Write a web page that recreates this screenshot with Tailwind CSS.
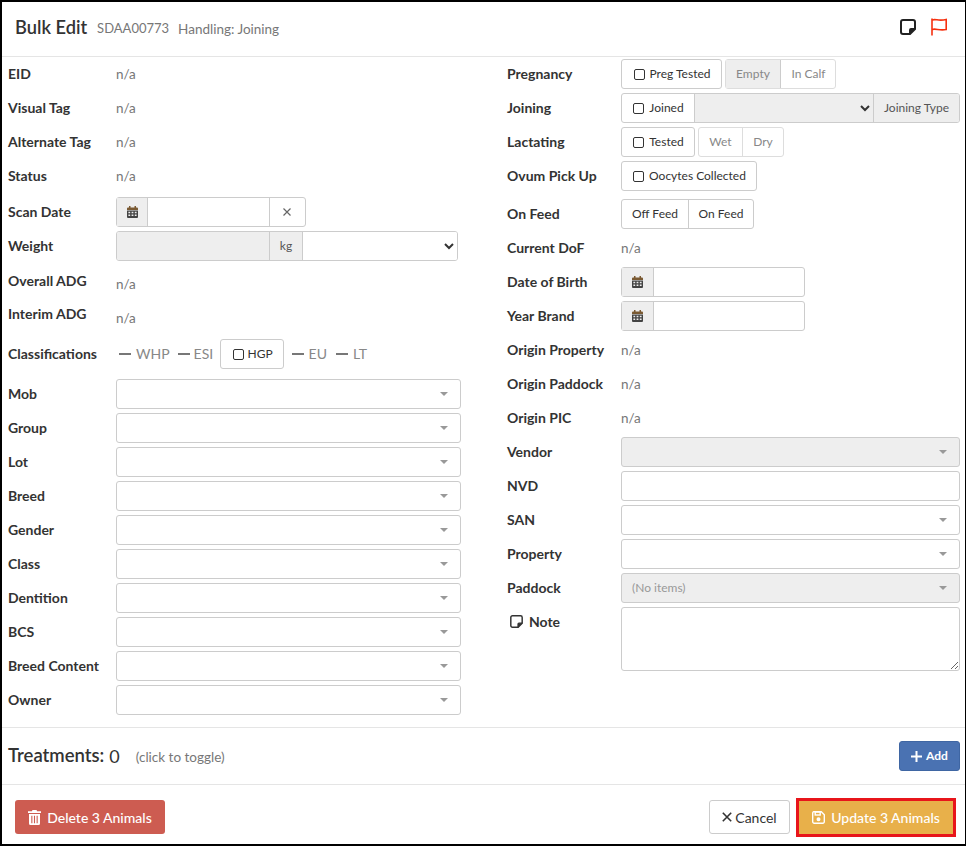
<!DOCTYPE html>
<html lang="en">
<head>
<meta charset="UTF-8">
<title>Bulk Edit</title>
<script src="https://cdn.jsdelivr.net/npm/@tailwindcss/browser@4"></script>
</head>
<body class="bg-white">
<div class="w-[966px] h-[846px] flex flex-col border-t-2 border-l-2 border-r border-b-2 border-black bg-white font-['Lato',sans-serif] text-[14px] text-[#333]">

  <!-- header -->
  <div class="h-[55px] shrink-0 flex items-center pl-[13px] pr-[18px] border-b border-[#e5e5e5]">
    <span class="text-[18.250px] font-semibold text-[#333] pb-[2px]">Bulk Edit</span>
    <span class="ml-[10px] text-[13px] text-[#777]">SDAA00773</span>
    <span class="ml-[9px] text-[13.500px] text-[#777]">Handling: Joining</span>
    <div class="ml-auto flex items-center gap-[15px] pb-[4px]">
      <svg width="16" height="16" viewBox="0 0 16 16" fill="none" stroke="#222" stroke-width="2"><path d="M10 15H3a2 2 0 0 1-2-2V3a2 2 0 0 1 2-2h10a2 2 0 0 1 2 2v7z"/><path d="M15 10h-4a1 1 0 0 0-1 1v4" fill="#222"/></svg>
      <svg width="16" height="18" viewBox="0 0 16 18" fill="none" stroke="#f5300f" stroke-width="1.600"><path d="M1 0.500V17.500"/><path d="M1 2C5 0.500 7 3.500 15.200 1.500V11.500C8 13 5 10 1 11.500"/></svg>
    </div>
  </div>

  <!-- form -->
  <div class="h-[671px] shrink-0 flex border-b border-[#e5e5e5]">
    <div class="w-[459px] shrink-0 pl-[6px]">
      <div class="h-[34px] flex items-center"><span class="w-[108px] pb-[2px] font-bold">EID</span><span class="text-[13.500px] text-[#777]">n/a</span></div>
      <div class="h-[34px] flex items-center"><span class="w-[108px] pb-[2px] font-bold">Visual Tag</span><span class="text-[13.500px] text-[#777]">n/a</span></div>
      <div class="h-[34px] flex items-center"><span class="w-[108px] pb-[2px] font-bold">Alternate Tag</span><span class="text-[13.500px] text-[#777]">n/a</span></div>
      <div class="h-[34px] flex items-center"><span class="w-[108px] pb-[2px] font-bold">Status</span><span class="text-[13.500px] text-[#777]">n/a</span></div>
      <div class="h-[34px] mt-[2px] flex items-center">
        <span class="w-[108px] pb-[2px] font-bold">Scan Date</span>
        <div class="h-[30px] w-[190px] flex border border-[#ccc] rounded-[3px]">
          <span class="w-[31px] bg-[#eee] border-r border-[#ccc] flex items-center justify-center">
            <svg width="11" height="12" viewBox="0 0 11 12"><path d="M2 0h1.500v1.500h4V0H9v1.500h1a1 1 0 0 1 1 1V4H0V2.500a1 1 0 0 1 1-1h1z" fill="#7a5a33"/><path d="M0 4.600h11V11a1 1 0 0 1-1 1H1a1 1 0 0 1-1-1zm1.400 1.200v1.400h1.800V5.800zm3.200 0v1.400h1.800V5.800zm3.200 0v1.400h1.800V5.800zM1.400 8.600v1.400h1.800V8.600zm3.200 0v1.400h1.800V8.600zm3.200 0v1.400h1.800V8.600z" fill="#444" fill-rule="evenodd"/></svg>
          </span>
          <span class="w-[122px] border-r border-[#ccc]"></span>
          <span class="flex-1 flex items-center justify-center pr-[2px]">
            <svg width="8" height="8" viewBox="0 0 8 8" stroke="#666" stroke-width="1.200"><path d="M0.500 0.500L7.500 7.500M7.500 0.500L0.500 7.500"/></svg>
          </span>
        </div>
      </div>
      <div class="h-[34px] flex items-center">
        <span class="w-[108px] pb-[2px] font-bold">Weight</span>
        <div class="h-[30px] w-[342px] flex border border-[#ccc] rounded-[3px] overflow-hidden">
          <span class="w-[153px] bg-[#eee] border-r border-[#ccc]"></span>
          <span class="w-[33px] bg-[#eee] border-r border-[#ccc] flex items-center justify-center text-[12px] text-[#555]">kg</span>
          <select class="flex-1 bg-white outline-none pl-1 pr-[4px]"><option></option></select>
        </div>
      </div>
      <div class="h-[34px] mt-[4px] flex items-center"><span class="w-[108px] pb-[2px] font-bold -mt-[6px]">Overall ADG</span><span class="text-[13.500px] text-[#777]">n/a</span></div>
      <div class="h-[34px] flex items-center"><span class="w-[108px] pb-[2px] font-bold -mt-[8px]">Interim ADG</span><span class="text-[13.500px] text-[#777]">n/a</span></div>
      <div class="h-[34px] mt-[2px] flex items-center">
        <span class="w-[111px] pb-[2px] font-bold">Classifications</span>
        <div class="flex items-center text-[#888]">
          <span class="w-[12px] h-[1.500px] bg-[#777] mr-[5px]"></span><span class="pb-[2px]">WHP</span>
          <span class="w-[12px] h-[1.500px] bg-[#777] ml-[8px] mr-[4px]"></span><span class="pb-[2px] w-[21px]">ESI</span>
          <span class="ml-[5px] w-[64px] h-[30px] border border-[#ccc] rounded-[3px] pl-[2px] flex items-center justify-center gap-[4px] text-[12px] text-[#333]">
            <span class="w-[11px] h-[11px] border border-[#333] rounded-[2px]"></span>HGP
          </span>
          <span class="w-[12px] h-[1.500px] bg-[#777] ml-[8px] mr-[5px]"></span><span class="pb-[2px]">EU</span>
          <span class="w-[12px] h-[1.500px] bg-[#777] ml-[9px] mr-[5px]"></span><span class="pb-[2px]">LT</span>
        </div>
      </div>
      <div id="left-selects" class="mt-[6px]"></div>
    </div>

    <div class="w-[453px] ml-[46px] shrink-0">
      <div class="h-[34px] flex items-center">
        <span class="w-[114px] pb-[2px] font-bold">Pregnancy</span>
        <div class="flex gap-[3px] text-[12px]">
          <span class="h-[30px] w-[101px] border border-[#ccc] rounded-[3px] pl-[1px] flex items-center justify-center gap-[5px]"><span class="w-[11px] h-[11px] border border-[#333] rounded-[2px]"></span>Preg Tested</span>
          <span class="h-[30px] flex border border-[#ddd] rounded-[3px] text-[#888]">
            <span class="w-[55px] bg-[#eee] border-r border-[#ccc] flex items-center justify-center">Empty</span>
            <span class="w-[54px] flex items-center justify-center pl-[1px]">In Calf</span>
          </span>
        </div>
      </div>
      <div class="h-[34px] flex items-center">
        <span class="w-[114px] pb-[2px] font-bold">Joining</span>
        <div class="h-[30px] w-[339px] flex border border-[#ccc] rounded-[3px] overflow-hidden text-[12px]">
          <span class="w-[72px] pl-[1px] flex items-center justify-center gap-[5px]"><span class="w-[11px] h-[11px] border border-[#333] rounded-[2px]"></span>Joined</span>
          <select class="w-[180px] bg-[#eee] border-x border-[#ccc] outline-none pr-[3px]"><option></option></select>
          <span class="flex-1 bg-[#eee] flex items-center justify-center text-[#555]">Joining Type</span>
        </div>
      </div>
      <div class="h-[34px] flex items-center">
        <span class="w-[114px] pb-[2px] font-bold">Lactating</span>
        <div class="flex gap-[3px] text-[12px]">
          <span class="h-[30px] w-[74px] border border-[#ccc] rounded-[3px] pl-[1px] flex items-center justify-center gap-[5px]"><span class="w-[11px] h-[11px] border border-[#333] rounded-[2px]"></span>Tested</span>
          <span class="h-[30px] flex border border-[#ddd] rounded-[3px] text-[#888]">
            <span class="w-[44px] border-r border-[#ddd] flex items-center justify-center">Wet</span>
            <span class="w-[40px] flex items-center justify-center">Dry</span>
          </span>
        </div>
      </div>
      <div class="h-[34px] flex items-center">
        <span class="w-[114px] pb-[2px] font-bold">Ovum Pick Up</span>
        <span class="h-[30px] w-[136px] border border-[#ccc] rounded-[3px] pl-[1px] flex items-center justify-center gap-[5px] text-[12px]"><span class="w-[11px] h-[11px] border border-[#333] rounded-[2px]"></span>Oocytes Collected</span>
      </div>
      <div class="h-[34px] mt-[4px] flex items-center">
        <span class="w-[114px] pb-[2px] font-bold">On Feed</span>
        <span class="h-[30px] flex border border-[#ccc] rounded-[3px] text-[12px]">
          <span class="w-[67px] border-r border-[#ccc] flex items-center justify-center">Off Feed</span>
          <span class="w-[64px] flex items-center justify-center">On Feed</span>
        </span>
      </div>
      <div class="h-[34px] flex items-center"><span class="w-[114px] pb-[2px] font-bold">Current DoF</span><span class="text-[13.500px] text-[#777]">n/a</span></div>
      <div class="h-[34px] flex items-center">
        <span class="w-[114px] pb-[2px] font-bold">Date of Birth</span>
        <div class="h-[30px] w-[184px] flex border border-[#ccc] rounded-[3px]">
          <span class="w-[32px] bg-[#eee] border-r border-[#ccc] flex items-center justify-center">
            <svg width="11" height="12" viewBox="0 0 11 12"><path d="M2 0h1.500v1.500h4V0H9v1.500h1a1 1 0 0 1 1 1V4H0V2.500a1 1 0 0 1 1-1h1z" fill="#7a5a33"/><path d="M0 4.600h11V11a1 1 0 0 1-1 1H1a1 1 0 0 1-1-1zm1.400 1.200v1.400h1.800V5.800zm3.200 0v1.400h1.800V5.800zm3.200 0v1.400h1.800V5.800zM1.400 8.600v1.400h1.800V8.600zm3.200 0v1.400h1.800V8.600zm3.200 0v1.400h1.800V8.600z" fill="#444" fill-rule="evenodd"/></svg>
          </span>
        </div>
      </div>
      <div class="h-[34px] flex items-center">
        <span class="w-[114px] pb-[2px] font-bold">Year Brand</span>
        <div class="h-[30px] w-[184px] flex border border-[#ccc] rounded-[3px]">
          <span class="w-[32px] bg-[#eee] border-r border-[#ccc] flex items-center justify-center">
            <svg width="11" height="12" viewBox="0 0 11 12"><path d="M2 0h1.500v1.500h4V0H9v1.500h1a1 1 0 0 1 1 1V4H0V2.500a1 1 0 0 1 1-1h1z" fill="#7a5a33"/><path d="M0 4.600h11V11a1 1 0 0 1-1 1H1a1 1 0 0 1-1-1zm1.400 1.200v1.400h1.800V5.800zm3.200 0v1.400h1.800V5.800zm3.200 0v1.400h1.800V5.800zM1.400 8.600v1.400h1.800V8.600zm3.200 0v1.400h1.800V8.600zm3.200 0v1.400h1.800V8.600z" fill="#444" fill-rule="evenodd"/></svg>
          </span>
        </div>
      </div>
      <div class="h-[34px] flex items-center"><span class="w-[114px] pb-[2px] font-bold">Origin Property</span><span class="text-[13.500px] text-[#777]">n/a</span></div>
      <div class="h-[34px] flex items-center"><span class="w-[114px] pb-[2px] font-bold">Origin Paddock</span><span class="text-[13.500px] text-[#777]">n/a</span></div>
      <div class="h-[34px] flex items-center"><span class="w-[114px] pb-[2px] font-bold">Origin PIC</span><span class="text-[13.500px] text-[#777]">n/a</span></div>
      <div class="h-[34px] flex items-center">
        <span class="w-[114px] pb-[2px] font-bold">Vendor</span>
        <div class="h-[30px] flex-1 bg-[#eee] border border-[#ccc] rounded-[3px] flex items-center justify-end pr-[12px]"><span class="w-0 h-0 border-x-[4px] border-x-transparent border-t-[4px] border-t-[#999]"></span></div>
      </div>
      <div class="h-[34px] flex items-center">
        <span class="w-[114px] pb-[2px] font-bold">NVD</span>
        <div class="h-[30px] flex-1 border border-[#ccc] rounded-[3px]"></div>
      </div>
      <div class="h-[34px] flex items-center">
        <span class="w-[114px] pb-[2px] font-bold">SAN</span>
        <div class="h-[30px] flex-1 border border-[#ccc] rounded-[3px] flex items-center justify-end pr-[12px]"><span class="w-0 h-0 border-x-[4px] border-x-transparent border-t-[4px] border-t-[#999]"></span></div>
      </div>
      <div class="h-[34px] flex items-center">
        <span class="w-[114px] pb-[2px] font-bold">Property</span>
        <div class="h-[30px] flex-1 border border-[#ccc] rounded-[3px] flex items-center justify-end pr-[12px]"><span class="w-0 h-0 border-x-[4px] border-x-transparent border-t-[4px] border-t-[#999]"></span></div>
      </div>
      <div class="h-[34px] flex items-center">
        <span class="w-[114px] pb-[2px] font-bold">Paddock</span>
        <div class="h-[30px] flex-1 bg-[#eee] border border-[#ccc] rounded-[3px] flex items-center justify-between pl-[10px] pr-[12px] text-[12px] text-[#999]">(No items)<span class="w-0 h-0 border-x-[4px] border-x-transparent border-t-[4px] border-t-[#999]"></span></div>
      </div>
      <div class="h-[68px] flex items-start">
        <span class="w-[114px] h-[34px] pb-[2px] font-bold flex items-center gap-[6px] pl-[3px]">
          <svg width="13" height="13" viewBox="0 0 16 16" fill="none" stroke="#333" stroke-width="1.800"><path d="M10 15H3a2 2 0 0 1-2-2V3a2 2 0 0 1 2-2h10a2 2 0 0 1 2 2v7z"/><path d="M15 10h-4a1 1 0 0 0-1 1v4" fill="#333"/></svg>Note
        </span>
        <textarea class="mt-[2px] h-[64px] flex-1 border border-[#ccc] rounded-[3px] outline-none"></textarea>
      </div>
    </div>
  </div>

  <!-- treatments -->
  <div class="h-[57px] shrink-0 flex items-center pl-[6px] pr-[5px] border-b border-[#e5e5e5]">
    <span class="text-[18.500px] font-semibold">Treatments:</span>
    <span class="ml-[5px] text-[18px]">0</span>
    <span class="ml-[16px] pt-[2px] text-[13.500px] text-[#777]">(click to toggle)</span>
    <button class="ml-auto w-[61px] h-[30px] bg-[#4a72b2] border border-[#3f66a3] rounded-[3px] text-white text-[12px] font-bold flex items-center justify-center gap-[4px]">
      <svg width="11" height="11" viewBox="0 0 11 11" stroke="#fff" stroke-width="2"><path d="M5.500 0V11M0 5.500H11"/></svg>Add
    </button>
  </div>

  <!-- footer -->
  <div class="flex-1 flex items-center pl-[13px] pr-[9px] pt-[5px]">
    <button class="w-[150px] h-[34px] bg-[#cd5c51] rounded-[3px] text-white text-[14px] font-medium flex items-center justify-center gap-[6px]">
      <svg width="13" height="15" viewBox="0 0 13 15" fill="#fff"><path d="M4.500 0h4l.6 1.300H13v1.700H0V1.300h3.900z"/><path d="M1 4h11v9.500a1.500 1.500 0 0 1-1.500 1.500h-8A1.500 1.500 0 0 1 1 13.500zm2.300 1.800v7.400h1.100V5.800zm2.650 0v7.400h1.100V5.800zm2.650 0v7.400h1.100V5.800z" fill-rule="evenodd"/></svg>Delete 3 Animals
    </button>
    <button class="ml-auto w-[81px] h-[34px] bg-white border border-[#ccc] rounded-[3px] text-[14px] flex items-center justify-center gap-[3px]">
      <svg width="10" height="10" viewBox="0 0 10 10" stroke="#333" stroke-width="1.600"><path d="M0.800 0.800L9.200 9.200M9.200 0.800L0.800 9.200"/></svg>Cancel
    </button>
    <button class="ml-[6px] w-[160px] h-[39px] bg-[#e8b04a] border-[3px] border-[#e8151b] text-white text-[14px] font-medium flex items-center justify-center gap-[6px]">
      <svg width="13" height="13" viewBox="0 0 13 13" fill="none" stroke="#fff" stroke-width="1.400"><path d="M1.700.7h7.600l3 3v7.100a1.500 1.500 0 0 1-1.500 1.500H2.200A1.500 1.500 0 0 1 .7 10.800V2.200A1.500 1.500 0 0 1 1.700.7z"/><rect x="3.200" y="1" width="5" height="3" /><circle cx="6.500" cy="8.300" r="1.300" fill="#fff"/></svg>Update 3 Animals
    </button>
  </div>
</div>

<script>
  // kendo style dropdown rows, left column
  const names = ['Mob', 'Group', 'Lot', 'Breed', 'Gender', 'Class', 'Dentition', 'BCS', 'Breed Content', 'Owner'];
  const holder = document.getElementById('left-selects');
  names.forEach(name => {
    holder.innerHTML += `<div class="h-[34px] flex items-center">
      <span class="w-[108px] pb-[2px] font-bold">${name}</span>
      <div class="h-[30px] w-[345px] border border-[#ccc] rounded-[3px] flex items-center justify-end pr-[12px]"><span class="w-0 h-0 border-x-[4px] border-x-transparent border-t-[4px] border-t-[#999]"></span></div>
    </div>`;
  });
</script>
</body>
</html>
